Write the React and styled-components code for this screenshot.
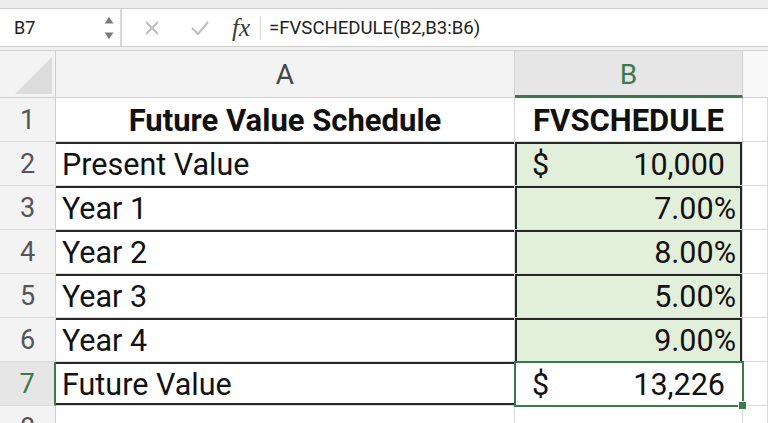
import React from 'react';
import styled, { createGlobalStyle, css } from 'styled-components';

const GlobalStyle = createGlobalStyle`
  html, body { margin: 0; padding: 0; background: #fff; overflow: hidden; }
  body { font-family: Roboto, "Liberation Sans", Arial, sans-serif; }
`;

const GRID = '#dadada';
const INK = '#262626';
const SEL = '#3c7a4e';

const rows = [
  { n: 1, a: 'Future Value Schedule', b: 'FVSCHEDULE', head: true },
  { n: 2, a: 'Present Value', b: '10,000', dollar: true },
  { n: 3, a: 'Year 1', b: '7.00%' },
  { n: 4, a: 'Year 2', b: '8.00%' },
  { n: 5, a: 'Year 3', b: '5.00%' },
  { n: 6, a: 'Year 4', b: '9.00%' },
  { n: 7, a: 'Future Value', b: '13,226', dollar: true, selected: true },
  { n: 8, a: '', b: '', empty: true },
];

export default function App() {
  return (
    <Page>
      <GlobalStyle />
      <TopStrip />
      <FormulaBar>
        <NameBox>
          <span>B7</span>
          <Stepper>
            <svg width="10" height="26" viewBox="0 0 10 26">
              <path d="M5 2 L9.5 8.5 H0.5 Z" fill="#7a7a7a" />
              <path d="M5 24 L9.5 17.5 H0.5 Z" fill="#7a7a7a" />
            </svg>
          </Stepper>
        </NameBox>
        <Controls>
          <svg width="16" height="16" viewBox="0 0 16 16">
            <path d="M2 2 L14 14 M14 2 L2 14" stroke="#bdbdbd" strokeWidth="2" fill="none" />
          </svg>
          <svg width="20" height="16" viewBox="0 0 20 16">
            <path d="M2 8 L8 14 L18 2" stroke="#bdbdbd" strokeWidth="2" fill="none" />
          </svg>
          <Fx>fx</Fx>
        </Controls>
        <Divider />
        <Formula>=FVSCHEDULE(B2,B3:B6)</Formula>
      </FormulaBar>
      <Gap />
      <Sheet>
        <Corner>
          <Triangle />
        </Corner>
        <ColHead>A</ColHead>
        <ColHead $active>B</ColHead>
        <ColHead $blank />

        {rows.map((r) => (
          <React.Fragment key={r.n}>
            <RowHead $active={r.selected}>{r.n}</RowHead>
            <Cell
              $align={r.head ? 'center' : 'left'}
              $bold={r.head}
              $top={!r.head && !r.empty}
              $bottom={r.n === 7}
            >
              {r.a}
            </Cell>
            <Cell
              $fill={!r.head && !r.empty && !r.selected}
              $align={r.head ? 'center' : 'right'}
              $bold={r.head}
              $top={!r.head && !r.empty && !r.selected}
              $left={!r.head && !r.empty && !r.selected}
              $right={!r.head && !r.empty && !r.selected}
              $dollar={r.dollar}
              $selected={r.selected}
            >
              {r.dollar && <Dollar>$</Dollar>}
              {r.b}
              {r.selected && <Handle />}
            </Cell>
            <Cell />
          </React.Fragment>
        ))}
      </Sheet>
    </Page>
  );
}

const Page = styled.div`
  width: 768px;
  height: 423px;
  overflow: hidden;
  background: #fff;
`;

const TopStrip = styled.div`
  height: 8px;
  background: #ededed;
  border-bottom: 1px solid #cdcdcd;
`;

const FormulaBar = styled.div`
  height: 37px;
  display: flex;
  align-items: center;
  background: #fff;
  border-bottom: 1px solid #cdcdcd;
`;

const NameBox = styled.div`
  width: 122px;
  height: 100%;
  box-sizing: border-box;
  border-right: 2px solid #d8d8d8;
  display: flex;
  align-items: center;
  justify-content: space-between;
  padding: 0 6px 0 14px;
  font-size: 18px;
  color: #222;
`;

const Stepper = styled.div`
  display: flex;
  align-items: center;
`;

const Controls = styled.div`
  display: flex;
  align-items: center;
  gap: 26px;
  padding-left: 22px;
  svg:nth-child(2) { margin-left: 4px; }
`;

const Fx = styled.span`
  font-family: "Liberation Serif", "DejaVu Serif", serif;
  font-style: italic;
  font-size: 25px;
  color: #3a3a3a;
  margin-left: -4px;
  line-height: 1;
`;

const Divider = styled.div`
  width: 1px;
  height: 24px;
  background: #d6d6d6;
  margin: 0 8px 0 10px;
`;

const Formula = styled.div`
  font-size: 18.6px;
  color: #222;
`;

const Gap = styled.div`
  height: 3px;
  background: #f1f1f1;
`;

const Sheet = styled.div`
  display: grid;
  grid-template-columns: 56px 459px 228px 1fr;
  grid-template-rows: 47px repeat(8, 44px);
  border-top: 1px solid #d2d2d2;
`;

const Corner = styled.div`
  position: relative;
  background: #f3f3f3;
  border-right: 1px solid #cfcfcf;
  border-bottom: 1px solid #cfcfcf;
`;

const Triangle = styled.div`
  position: absolute;
  right: 3px;
  bottom: 3px;
  width: 37px;
  height: 37px;
  background: #dcdcdc;
  clip-path: polygon(100% 0, 100% 100%, 0 100%);
`;

const ColHead = styled.div`
  display: flex;
  align-items: center;
  justify-content: center;
  font-size: 28px;
  color: #474747;
  background: #f3f3f3;
  border-right: 1px solid #d0d0d0;
  border-bottom: 1px solid #cfcfcf;
  ${(p) =>
    p.$active &&
    css`
      background: #e6e6e6;
      color: ${SEL};
      border-bottom: 3px solid ${SEL};
      padding-top: 2px;
    `}
  ${(p) =>
    p.$blank &&
    css`
      background: #f8f8f8;
      border-right: none;
    `}
`;

const RowHead = styled.div`
  display: flex;
  align-items: center;
  justify-content: center;
  font-size: 27px;
  color: #555;
  background: #f3f3f3;
  border-right: 1px solid #cfcfcf;
  border-bottom: 1px solid #dcdcdc;
  ${(p) =>
    p.$active &&
    css`
      background: #e6e6e6;
      color: ${SEL};
      border-right: 2px solid ${SEL};
    `}
`;

const edge = (p) => {
  const s = [];
  if (p.$top) s.push(`inset 0 2px 0 ${INK}`);
  if (p.$bottom) s.push(`inset 0 -2px 0 ${INK}`);
  if (p.$left) s.push(`inset 2px 0 0 ${INK}`);
  if (p.$right) s.push(`inset -2px 0 0 ${INK}`);
  return s.length ? s.join(', ') : 'none';
};

const Cell = styled.div`
  position: relative;
  display: flex;
  align-items: center;
  justify-content: ${(p) =>
    p.$align === 'center' ? 'center' : p.$align === 'right' ? 'flex-end' : 'flex-start'};
  padding: 2px ${(p) => (p.$dollar ? '17px' : '6px')} 0 6px;
  font-size: ${(p) => (p.$bold ? '31px' : '30.5px')};
  font-weight: ${(p) => (p.$bold ? 700 : 400)};
  color: #111;
  background: ${(p) => (p.$fill ? '#e2efda' : '#fff')};
  border-right: 1px solid ${GRID};
  border-bottom: 1px solid ${GRID};
  box-shadow: ${edge};
  ${(p) =>
    p.$selected &&
    css`
      outline: 2px solid ${SEL};
      outline-offset: -1px;
      z-index: 1;
    `}
`;

const Dollar = styled.span`
  position: absolute;
  left: 17px;
`;

const Handle = styled.span`
  position: absolute;
  right: -5px;
  bottom: -5px;
  width: 7px;
  height: 7px;
  background: ${SEL};
  border: 1px solid #fff;
`;
